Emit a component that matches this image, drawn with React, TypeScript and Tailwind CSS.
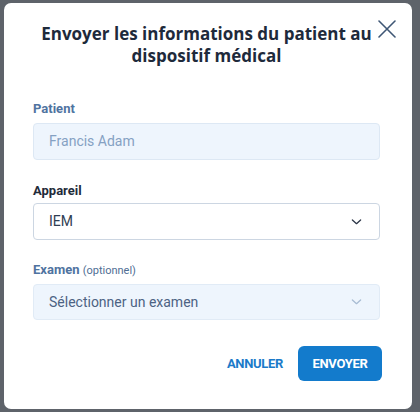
import { FC } from "react";

const Chevron: FC<{ className?: string }> = ({ className }) => (
  <svg viewBox="0 0 12 8" className={className} fill="none" stroke="currentColor" strokeWidth={1.4}>
    <path d="M1.5 1.8l4.5 4 4.5-4" strokeLinecap="round" strokeLinejoin="round" />
  </svg>
);

const App: FC = () => {
  return (
    <div
      className="w-[420px] h-[412px] overflow-hidden bg-[#5e636a] pt-[3px] pl-[4px]"
      style={{ fontFamily: "Roboto, 'Noto Sans', sans-serif" }}
    >
      <div className="relative w-[408px] h-[406px] bg-white rounded-[7px] pt-[20px] pl-[29px] pr-[32px]">
        <button className="absolute top-[17px] right-[16px] text-[#3f5775]">
          <svg viewBox="0 0 18 18" className="w-[18px] h-[18px]" fill="none" stroke="currentColor" strokeWidth={1.6}>
            <path d="M1 1l16 16M17 1L1 17" strokeLinecap="round" />
          </svg>
        </button>

        <h2
          className="-mx-[10px] text-center whitespace-nowrap text-[17px] leading-[22px] font-bold text-[#1e2a3b]"
          style={{ fontFamily: "'Open Sans', sans-serif" }}
        >
          Envoyer les informations du patient au
          <br />
          dispositif médical
        </h2>

        <div className="mt-[34px]">
          <label className="block text-[13px] leading-[16px] font-bold text-[#4f73a0]">Patient</label>
          <div className="mt-[6px] h-[37px] flex items-center px-[15px] rounded-[4px] bg-[#eef5fd] border border-[#dde8f4] text-[14px] text-[#85a1c3]">
            Francis Adam
          </div>
        </div>

        <div className="mt-[23px]">
          <label className="block text-[13px] leading-[16px] font-bold text-[#1f2b3a]">Appareil</label>
          <div className="mt-[4px] h-[37px] flex items-center justify-between pl-[15px] pr-[17px] rounded-[4px] bg-white border border-[#ccd6e2] text-[14px] text-[#2f3e52]">
            <span>IEM</span>
            <Chevron className="w-[11px] h-[8px] text-[#2a3446]" />
          </div>
        </div>

        <div className="mt-[22px]">
          <label className="block text-[13px] leading-[16px] font-bold text-[#4f73a0]">
            Examen <span className="font-normal text-[11px] text-[#4f6e94]">(optionnel)</span>
          </label>
          <div className="mt-[5px] h-[36px] flex items-center justify-between pl-[15px] pr-[17px] rounded-[4px] bg-[#eef5fd] border border-[#e1ebf6] text-[14px] text-[#4c6283]">
            <span>Sélectionner un examen</span>
            <Chevron className="w-[11px] h-[8px] text-[#a8bcd3]" />
          </div>
        </div>

        <div className="mt-[26px] flex justify-end items-center gap-[15px] -mr-[2px]">
          <button className="text-[13px] font-bold text-[#1a7ac9] tracking-tight">ANNULER</button>
          <button className="h-[35px] w-[84px] rounded-[6px] bg-[#137bcc] text-white text-[13px] font-bold tracking-tight">
            ENVOYER
          </button>
        </div>
      </div>
    </div>
  );
};

export default App;
